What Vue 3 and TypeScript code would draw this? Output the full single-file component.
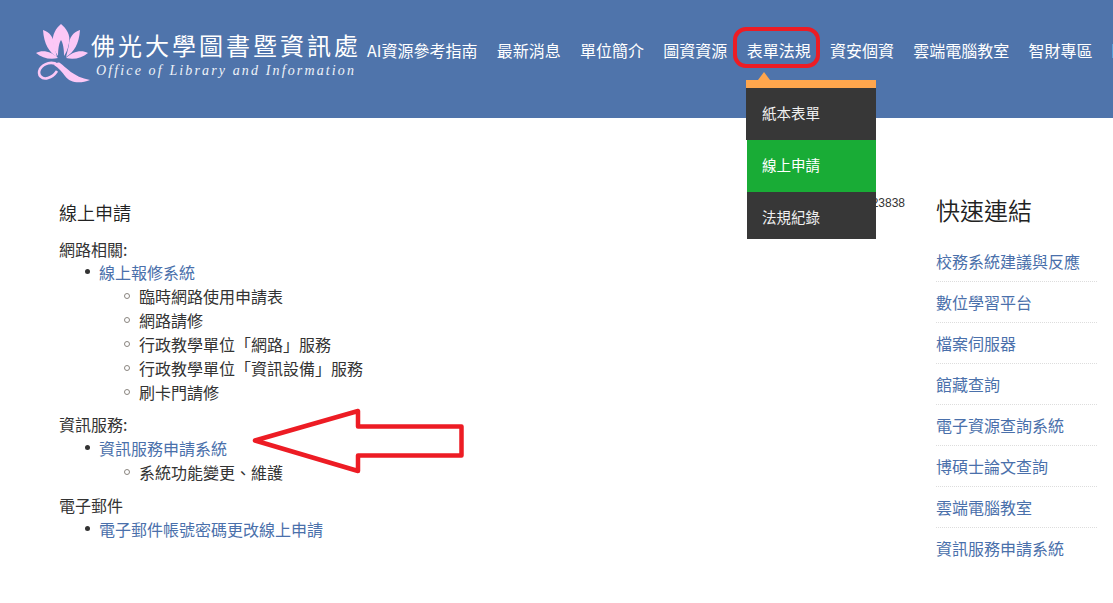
<script setup lang="ts">
const navItems: string[] = ['AI資源參考指南', '最新消息', '單位簡介', '圖資資源', '表單法規', '資安個資', '雲端電腦教室', '智財專區']
const dropdown: { label: string; active?: boolean }[] = [
  { label: '紙本表單' },
  { label: '線上申請', active: true },
  { label: '法規紀錄' },
]
const quickLinks: string[] = ['校務系統建議與反應', '數位學習平台', '檔案伺服器', '館藏查詢', '電子資源查詢系統', '博碩士論文查詢', '雲端電腦教室', '資訊服務申請系統']
const sections: { title: string; link: string; items: string[] }[] = [
  { title: '網路相關:', link: '線上報修系統', items: ['臨時網路使用申請表', '網路請修', '行政教學單位「網路」服務', '行政教學單位「資訊設備」服務', '刷卡門請修'] },
  { title: '資訊服務:', link: '資訊服務申請系統', items: ['系統功能變更、維護'] },
  { title: '電子郵件', link: '電子郵件帳號密碼更改線上申請', items: [] },
]
</script>

<template>
  <div class="page">
    <header class="header">
      <div class="logo">
        <svg class="lotus" viewBox="35 20 56 66" width="56" height="66" aria-hidden="true">
          <path d="M61 24C66 28 71 35 69 43C68 49 66 53 64 56C64 49 63 43 61 40C59 43 58 49 58 56C55 52 53 47 53 42C52 35 56 28 61 24Z" />
          <path d="M43 30C50 32 54 38 54 45L57 57C49 52 44 44 43 30Z" />
          <path d="M80 30C73 32 69 38 69 45L66 57C74 52 79 44 80 30Z" />
          <path d="M36 53C43 49 52 52 58 58C50 60 42 58 36 53Z" />
          <path d="M88 53C81 49 72 52 66 58C74 60 82 58 88 53Z" />
          <path d="M60 63C66 67 73 77 90 80C80 84 70 83 65 76C62 72 59 68 54 65C56 63 58 62 60 63Z" />
          <path class="loop" d="M58 65C52 61 44 63 40 69C37 75 42 80 48 78C52 77 55 74 57 71" />
        </svg>
        <div class="logo-text">
          <div class="logo-cn">佛光大學圖書暨資訊處</div>
          <div class="logo-en">Office of Library and Information</div>
        </div>
      </div>
      <nav class="nav">
        <a v-for="item in navItems" :key="item" class="nav-item">{{ item }}</a>
        <span class="nav-clip"></span>
      </nav>
    </header>

    <div class="body">
      <main class="main">
        <span class="counter">23838</span>
        <h2 class="main-title">線上申請</h2>
        <section v-for="s in sections" :key="s.title" class="section">
          <div class="section-title">{{ s.title }}</div>
          <ul class="list">
            <li>
              <a class="link">{{ s.link }}</a>
              <ul v-if="s.items.length" class="sublist">
                <li v-for="it in s.items" :key="it">{{ it }}</li>
              </ul>
            </li>
          </ul>
        </section>
      </main>
      <aside class="side">
        <h2 class="side-title">快速連結</h2>
        <a v-for="l in quickLinks" :key="l" class="side-link">{{ l }}</a>
      </aside>
    </div>

    <div class="dropdown">
      <span class="caret"></span>
      <a v-for="d in dropdown" :key="d.label" class="drop-item" :class="{ active: d.active }">{{ d.label }}</a>
    </div>

    <span class="highlight"></span>
    <svg class="arrow" viewBox="0 0 1113 603" width="1113" height="603" aria-hidden="true">
      <path d="M255 440.500L358 411V426.500H461.500V455.500H358V471Z" />
    </svg>
  </div>
</template>

<style>
html, body { margin: 0; overflow: hidden; background: #fff; }
</style>

<style scoped>
.page {
  position: relative;
  width: 1113px;
  height: 603px;
  overflow: hidden;
  font-family: "Noto Sans CJK TC", "Liberation Sans", sans-serif;
  font-size: 16px;
  line-height: 24px;
  color: #333;
  background: #fff;
}
.header {
  display: flex;
  height: 118px;
  background: #4f74ab;
  color: #fff;
  box-sizing: border-box;
  padding-left: 35px;
}
.logo {
  display: flex;
  width: 332px;
  flex: none;
  padding-top: 20px;
  box-sizing: border-box;
}
.lotus { flex: none; }
.lotus path { fill: #fcc8f6; }
.lotus .loop { fill: none; stroke: #fcc8f6; stroke-width: 2.6; }
.logo-text { white-space: nowrap; }
.logo-cn {
  margin-top: 10px;
  font-size: 24px;
  line-height: 30px;
  letter-spacing: 3px;
}
.logo-en {
  margin-top: 3px;
  margin-left: 5px;
  font-family: "Liberation Serif", serif;
  font-style: italic;
  font-size: 14px;
  line-height: 16px;
  letter-spacing: 2.13px;
  color: #eef2f8;
}
.nav {
  display: flex;
  gap: 19.3px;
  padding-top: 38px;
  white-space: nowrap;
}
.nav-item { height: 24px; }
.nav-clip {
  width: 14px;
  height: 14px;
  margin-top: 6px;
  background: #5a9fd8;
}
.body {
  display: flex;
  padding: 75px 0 0 59px;
}
.main {
  width: 846px;
  flex: none;
  margin-right: 32px;
}
.counter {
  float: right;
  margin-top: 3px;
  font-family: "Liberation Sans", sans-serif;
  font-size: 12px;
  line-height: 14px;
}
.main-title {
  margin: 7px 0 13px;
  font-size: 18px;
  line-height: 24px;
  font-weight: 350;
  color: #222;
}
.section { margin-bottom: 8px; }
.section:last-child { margin-top: 9px; }
.section-title { margin-bottom: 0; }
.section:first-of-type .section-title { height: 23px; }
.list, .sublist { margin: 0; padding-left: 40px; list-style: none; }
.list > li, .sublist > li { position: relative; }
.list > li::before {
  content: "";
  position: absolute;
  left: -14px;
  top: 9px;
  width: 5px;
  height: 5px;
  border-radius: 50%;
  background: #333;
}
.sublist > li::before {
  content: "";
  position: absolute;
  left: -15px;
  top: 9px;
  width: 6px;
  height: 6px;
  box-sizing: border-box;
  border: 1px solid #8a8580;
  border-radius: 50%;
  background: #fff;
}
.link { color: #4a70ab; }
.side {
  flex: 1;
  padding-right: 16px;
  min-width: 0;
  margin-left: -1px;
}
.side-title {
  margin: 1px 0 23px;
  font-size: 24px;
  line-height: 32px;
  font-weight: 350;
  color: #222;
}
.side-link {
  display: block;
  line-height: 24px;
  padding-bottom: 8px;
  margin-bottom: 8px;
  color: #4a70ab;
  border-bottom: 1px dotted #ddd;
}
.side-link:last-child { border-bottom: 0; }
.dropdown {
  position: absolute;
  left: 746px;
  top: 80px;
  width: 130px;
  border-top: 8px solid #ffa64d;
}
.caret {
  position: absolute;
  left: 12px;
  top: -16px;
  width: 0;
  height: 0;
  border: 6px solid transparent;
  border-top: 0;
  border-bottom: 8px solid #ffa64d;
}
.drop-item {
  display: block;
  height: 52px;
  padding-left: 16px;
  box-sizing: border-box;
  font-size: 14.500px;
  line-height: 50px;
  color: #f0f0f0;
  background: #373737;
}
.drop-item:last-child { height: 47px; line-height: 50px; margin-left: 1px; padding-left: 15px; }
.drop-item.active {
  margin-left: 1px;
  padding-left: 15px;
  background: #19ac36;
  color: #fff;
}
.highlight {
  position: absolute;
  left: 733px;
  top: 27px;
  width: 87px;
  height: 41px;
  box-sizing: border-box;
  border: 4px solid #ed1c24;
  border-radius: 13px;
}
.arrow {
  position: absolute;
  left: 0;
  top: 0;
  pointer-events: none;
}
.arrow path {
  fill: none;
  stroke: #ed1c24;
  stroke-width: 4.500;
  stroke-linejoin: round;
}
</style>
